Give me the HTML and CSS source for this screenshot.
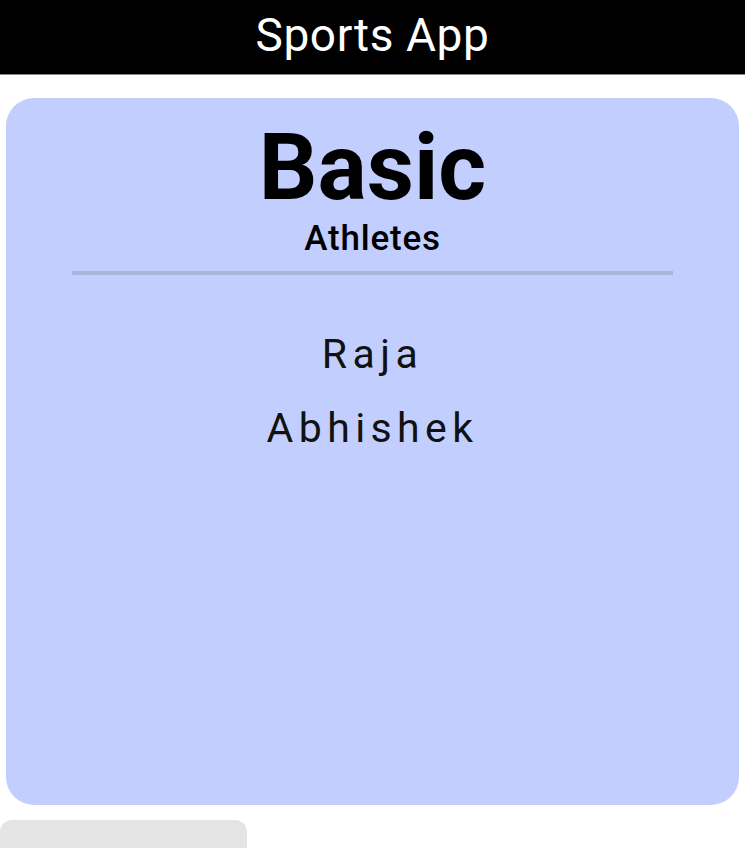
FILE: index.html
```html
<!DOCTYPE html>
<html>
<head>
<meta charset="utf-8">
<link rel="stylesheet" href="styles.css">
</head>
<body>
<header class="app-bar">Sports App</header>
<main class="content">
  <section class="card">
    <h1 class="title">Basic</h1>
    <h2 class="subtitle">Athletes</h2>
    <hr class="divider">
    <ul class="names">
      <li>Raja</li>
      <li>Abhishek</li>
    </ul>
  </section>
  <div class="bottom-pill"></div>
</main>
</body>
</html>
```
FILE: styles.css
```css
* { box-sizing: border-box; }
html, body { margin: 0; padding: 0; background: #ffffff; overflow: hidden; }
body { font-family: Roboto, "Noto Sans", sans-serif; color: #111; height: 848px; }
.app-bar {
  height: 75px;
  background: #000;
  color: #fff;
  font-size: 46px;
  letter-spacing: 0.6px;
  display: flex;
  align-items: center;
  justify-content: center;
  padding-bottom: 4px;
  border-bottom: 1px solid #888;
}
.content { display: flex; flex-direction: column; padding: 23px 6px 0 6px; }
.card {
  height: 707px;
  background: #c2cffe;
  border-radius: 28px;
  display: flex;
  flex-direction: column;
  align-items: center;
}
.title {
  margin: 20px 0 0 0;
  font-size: 92px;
  font-weight: 700;
  line-height: 100px;
  color: #000;
}
.subtitle {
  margin: 3px 0 0 0;
  font-size: 35px;
  font-weight: 500;
  letter-spacing: 0.8px;
  line-height: 36px;
  color: #000;
}
.divider {
  width: 601px;
  height: 4px;
  border: 0;
  margin: 14px 0 0 0;
  background: #aab5dc;
}
.names {
  list-style: none;
  margin: 59px 0 0 0;
  padding: 0;
  display: flex;
  flex-direction: column;
  align-items: center;
  gap: 33px;
}
.names li {
  font-size: 41px;
  letter-spacing: 5.4px;
  line-height: 41px;
  color: #111;
}
.bottom-pill {
  margin: 15px 0 0 -6px;
  width: 247px;
  height: 40px;
  background: #e4e4e4;
  border-radius: 12px;
}
```
